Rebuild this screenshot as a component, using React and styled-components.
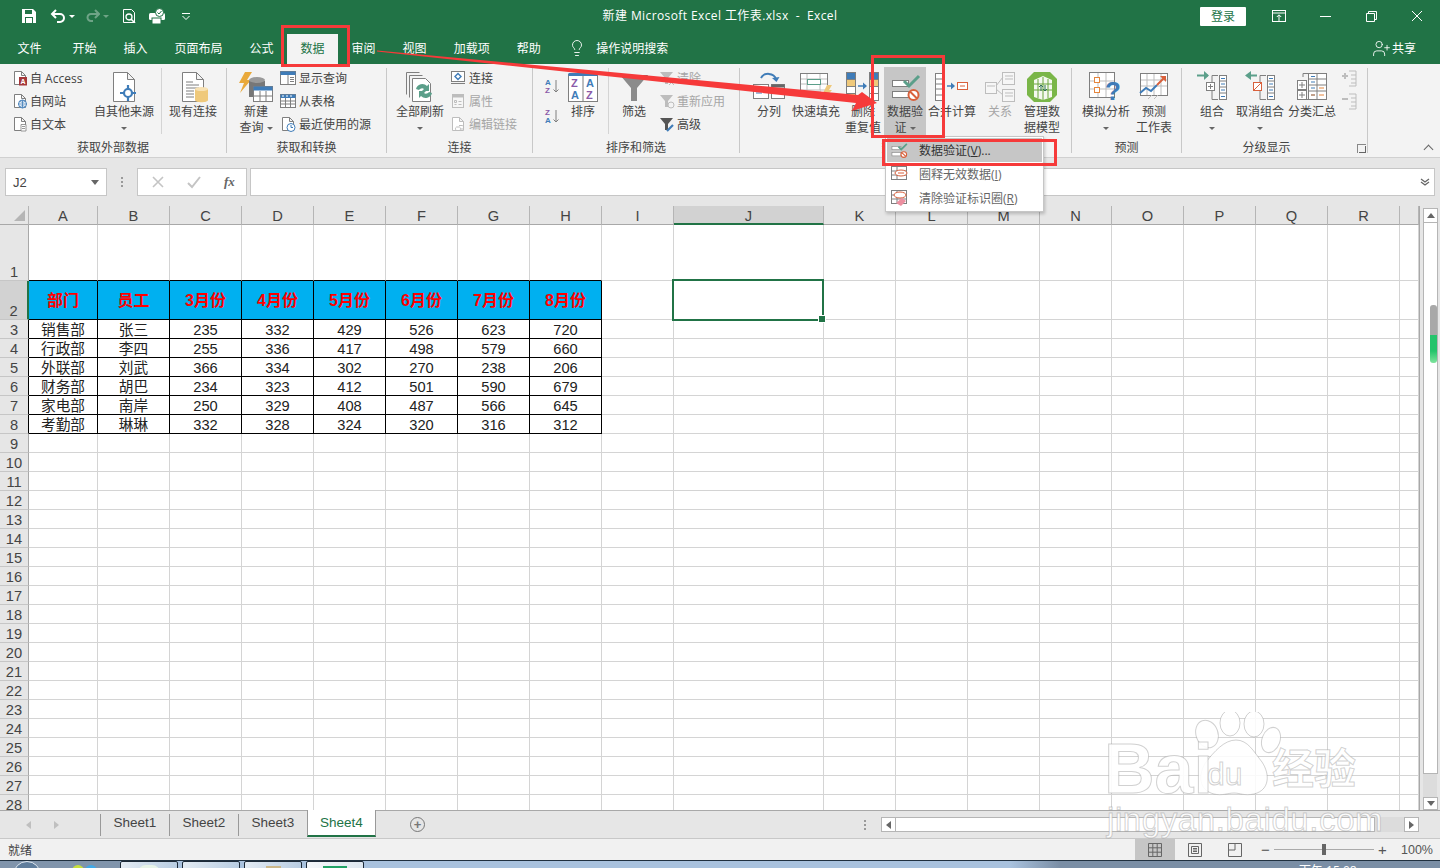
import React from "react";
import styled, { createGlobalStyle } from "styled-components";
import { Lightbulb, UserPlus } from "lucide-react";

const GREEN = "#217346";
const LINE = "#7f7f7f";
const BLUE = "#3f7cb8";
const SAND = "#efc97b";
const ORANGE = "#e5853c";
const RED = "#d9603b";
const TEAL = "#5b9f8a";
const MUTE = "#bdbdbd";

const GlobalStyle = createGlobalStyle`
  html, body { margin: 0; padding: 0; overflow: hidden; }
  body { font-family: "Open Sans", "Noto Sans CJK SC", sans-serif; }
  * { box-sizing: border-box; }
`;

/* ---------- icons ---------- */
const Svg = ({ s = 16, h, vb, children }) => (
  <svg width={s} height={h || s} viewBox={vb || `0 0 ${s} ${h || s}`} fill="none" style={{ display: "block", flex: "none" }}>
    {children}
  </svg>
);

const Page = ({ c = LINE }) => <path d="M2.5 1.5h7l4 4v9h-11zM9.5 1.5v4h4" stroke={c} fill="#fff" />;
const BigPage = ({ c = LINE }) => <path d="M5.5 1.5h14l7 7v22h-21zM19.5 1.5v7h7" stroke={c} fill="#fff" />;

const AccessIco = () => (
  <Svg><Page /><rect x="7" y="7" width="8" height="8.5" fill="#a4373a" /><text x="8.5" y="14" fontSize="7" fill="#fff" fontFamily="Liberation Sans" fontWeight="700">A</text></Svg>
);
const WebIco = () => (
  <Svg><Page /><circle cx="10.5" cy="11" r="4" fill="#fff" stroke={BLUE} /><path d="M6.5 11h8M10.5 7v8M8 8.5c2 1 3 1 5 0M8 13.5c2-1 3-1 5 0" stroke={BLUE} strokeWidth=".8" /></Svg>
);
const TextIco = () => (
  <Svg><Page /><path d="M9 8.5h5v6.5H9zM10 10.500h3M10 12.500h3" stroke={LINE} fill="#fff" strokeWidth=".8" /></Svg>
);
const ShowQueryIco = () => (
  <Svg><rect x=".5" y="1.500" width="15" height="13" fill="#fff" stroke={LINE} /><rect x=".5" y="1.500" width="15" height="3.500" fill={BLUE} /><path d="M8 5v9M10 7.500h4M10 9.500h4M10 11.500h4" stroke={LINE} /></Svg>
);
const TableIco = () => (
  <Svg><rect x=".5" y="1.500" width="15" height="13" fill="#fff" stroke={LINE} /><rect x=".5" y="1.500" width="15" height="3.500" fill={BLUE} /><path d="M2 3h12" stroke="#fff" strokeDasharray="2 2" /><path d="M5.500 5v9M10.500 5v9M1 8h14M1 11h14" stroke={LINE} /></Svg>
);
const RecentIco = () => (
  <Svg><Page /><circle cx="11" cy="11.500" r="4" fill="#fff" stroke={BLUE} /><path d="M11 9v2.500h2" stroke={BLUE} /></Svg>
);
const ConnectIco = () => (
  <Svg><rect x="1.500" y="1.500" width="13" height="10" fill="#fff" stroke={LINE} /><path d="M1 13.500h14" stroke={LINE} /><path d="M8 3.500l3 3-3 3-3-3z" stroke={BLUE} fill="#fff" strokeWidth="1.400" /></Svg>
);
const PropsIco = () => (
  <Svg><rect x="2.500" y="1.500" width="11" height="13" fill="#f6f6f6" stroke={MUTE} /><rect x="2.500" y="1.500" width="11" height="3" fill={MUTE} /><path d="M4.500 7.500h2v2h-2zM8.500 8.500h3M4.500 11.500h2M8.500 11.500h3" stroke={MUTE} /></Svg>
);
const LinksIco = () => (
  <Svg><Page c={MUTE} /><path d="M6.500 11h3a2 2 0 0 1 0 3.500h-3a2 2 0 0 1 0-3.500zM9 9.500h3.500a2 2 0 0 1 0 3.500H11" stroke={MUTE} fill="none" /></Svg>
);
const OtherSourceIco = () => (
  <Svg s={32}><BigPage /><circle cx="20" cy="22" r="4" stroke={BLUE} strokeWidth="2.200" fill="#fff" /><path d="M20 14v4M20 26v4M12 22h4M24 22h4" stroke={BLUE} strokeWidth="2.200" /></Svg>
);
const ExistingIco = () => (
  <Svg s={32}><BigPage /><path d="M9 11h7M9 14h13M9 17h13M9 20h8M9 23h8M9 26h8" stroke={LINE} /><path d="M18 18v11c0 3 13 3 13 0V18z" fill={SAND} /><ellipse cx="24.500" cy="18" rx="6.500" ry="2" fill="#f8e2b4" /></Svg>
);
const NewQueryIco = () => (
  <Svg s={36} h={32}>
    <path d="M7 1h7L9 9h4L2 22l4-10H1z" fill="#e9a93b" />
    <path d="M11 10v16h16V10z" fill="#777" /><ellipse cx="19" cy="9" rx="8" ry="3" fill="#9a9a9a" />
    <rect x="15.500" y="15.500" width="19" height="15" fill="#fff" stroke={LINE} /><rect x="15.500" y="15.500" width="19" height="4" fill={BLUE} />
    <path d="M22 20v10M28 20v10M16 25h18" stroke={LINE} />
  </Svg>
);
const RefreshIco = () => (
  <Svg s={32}>
    <path d="M2.500 1.500h13M2.500 1.500v22M5.500 4.500h13M5.500 4.500v22" stroke={LINE} />
    <path d="M8.500 7.500h13l5 5v18h-18z" fill="#fff" stroke={LINE} />
    <path d="M14 19a6.500 6.500 0 0 1 11-3l2-2v7h-7l2-2a3.500 3.500 0 0 0-5 1zM30 23a6.500 6.500 0 0 1-11 3l-2 2v-7h7l-2 2a3.500 3.500 0 0 0 5-1z" fill={TEAL} transform="translate(-2 -1)" />
  </Svg>
);
const SortUpIco = ({ flip }) => (
  <Svg>
    <text x="1" y="7" fontSize="8" fontWeight="700" fill={flip ? "#8a5aa8" : BLUE} fontFamily="Liberation Sans">{flip ? "Z" : "A"}</text>
    <text x="1" y="15" fontSize="8" fontWeight="700" fill={flip ? BLUE : "#8a5aa8"} fontFamily="Liberation Sans">{flip ? "A" : "Z"}</text>
    <path d="M12 2v12M9.500 11.500l2.500 2.500 2.500-2.500" stroke={LINE} />
  </Svg>
);
const SortBigIco = () => (
  <Svg s={30} h={32}>
    <rect x=".5" y="3.500" width="29" height="27" fill="#fff" stroke={LINE} /><rect x=".5" y="2" width="29" height="3" fill={BLUE} /><path d="M15 5v25" stroke={LINE} />
    <text x="3" y="16" fontSize="11" fontWeight="700" fill="#8a5aa8" fontFamily="Liberation Sans">Z</text>
    <text x="3" y="28" fontSize="11" fontWeight="700" fill={BLUE} fontFamily="Liberation Sans">A</text>
    <text x="18" y="16" fontSize="11" fontWeight="700" fill={BLUE} fontFamily="Liberation Sans">A</text>
    <text x="18" y="28" fontSize="11" fontWeight="700" fill="#8a5aa8" fontFamily="Liberation Sans">Z</text>
  </Svg>
);
const FunnelIco = () => (
  <Svg s={32}><path d="M2 4h28L19 17v13h-6V17z" fill="#8b8b8b" /><path d="M2 4h28l-3 3H5z" fill="#6d6d6d" /></Svg>
);
const MiniFunnel = ({ c = MUTE, children }) => (
  <Svg><path d="M1 2h13L9 8v6H6V8z" fill={c} />{children}</Svg>
);
const SplitIco = () => (
  <Svg s={32}>
    <path d="M8 7a8 7 0 0 1 15 1" stroke={BLUE} strokeWidth="2" /><path d="M19 7l4.500 4 3-5z" fill={BLUE} />
    <rect x=".5" y="13.500" width="15" height="14" fill="#fff" stroke={LINE} /><path d="M3 18h10M3 22h6" stroke={BLUE} />
    <rect x="18.500" y="13.500" width="13" height="14" fill="#fff" stroke={LINE} /><rect x="18.500" y="13.500" width="13" height="3" fill="#666" /><path d="M21 20h3M27 20h3" stroke={BLUE} />
  </Svg>
);
const FlashIco = () => (
  <Svg s={32}>
    <rect x=".5" y="2.500" width="27" height="22" fill="#fff" stroke={LINE} /><path d="M7 3v21M20 3v21M1 8h26M1 13h26M1 19h26" stroke={MUTE} />
    <rect x="7.500" y="8.500" width="13" height="5" fill="#fff" stroke={TEAL} />
    <rect x="4" y="19" width="16" height="6" fill="#ddd" /><path d="M27 14h5l-3 5h3l-9 10 3-7h-3z" fill={SAND} />
  </Svg>
);
const RemoveDupIco = () => (
  <Svg s={34} h={32}>
    {[0, 1, 2, 3].map((i) => (
      <rect key={i} x=".5" y={1.5 + i * 7} width="9" height="7" fill={i % 2 ? SAND : i === 0 ? BLUE : "#fff"} stroke={LINE} />
    ))}
    {[0, 1, 2, 3].map((i) => (
      <rect key={i} x="23.500" y={1.5 + i * 7} width="9" height="7" fill={i === 0 ? BLUE : i === 1 ? SAND : "#fff"} stroke={LINE} />
    ))}
    <path d="M12 15h7" stroke={BLUE} strokeWidth="1.500" /><path d="M17 11.500l4 3.500-4 3.500z" fill={BLUE} />
  </Svg>
);
const ValidateIco = ({ s = 32 }) => (
  <Svg s={s} vb="0 0 32 32">
    <rect x="3.500" y="9.500" width="16" height="6" fill="#fff" stroke={LINE} />
    <rect x="3.500" y="20.500" width="16" height="6" fill="#fff" stroke={LINE} />
    <path d="M15 10l5 5 10-10" stroke={TEAL} strokeWidth="3" />
    <circle cx="24.500" cy="24" r="5" fill="#fff" stroke={RED} strokeWidth="2" /><path d="M21 20.500l7 7" stroke={RED} strokeWidth="2" />
  </Svg>
);
const ConsolidateIco = () => (
  <Svg s={34} h={32}>
    <rect x=".5" y="2.500" width="9" height="27" fill="#fff" stroke={LINE} /><path d="M1 8h8M1 13h8M1 18h8M1 24h8" stroke={LINE} />
    <path d="M12 15h6" stroke={BLUE} strokeWidth="1.500" /><path d="M16 11.500l4 3.500-4 3.500z" fill={BLUE} />
    <rect x="22.500" y="11.500" width="10" height="7" fill="#fff" stroke={RED} /><path d="M25 15h5" stroke={RED} />
  </Svg>
);
const RelateIco = () => (
  <Svg s={32}>
    <rect x="1.500" y="11.500" width="11" height="11" fill="#f6f6f6" stroke={MUTE} /><rect x="18.500" y="1.500" width="12" height="12" fill="#f6f6f6" stroke={MUTE} /><rect x="18.500" y="18.500" width="12" height="12" fill="#f6f6f6" stroke={MUTE} />
    <path d="M12 15l7-9M12 18l7 6M3 15h8M21 5h8M21 8h8M21 22h8M21 25h8" stroke={MUTE} />
  </Svg>
);
const ModelIco = () => (
  <Svg s={32}>
    <path d="M8 1h16l7 7v16l-7 7H8l-7-7V8z" fill="#7ab648" />
    <path d="M8 9l9-4 9 4v17l-9 3-9-3z" fill="#fff" opacity=".92" />
    <path d="M12 8v19M17 6v23M22 8v19M8 13h18M8 19h18" stroke="#6aa53c" />
    <path d="M15 20v-6M13 16l2-2 2 2M19 14v6M17 18l2 2 2-2" stroke="#2f6f55" />
  </Svg>
);
const WhatIfIco = () => (
  <Svg s={34} h={32}>
    <rect x=".5" y="1.500" width="25" height="25" fill="#fff" stroke={LINE} /><path d="M9 2v24M17 2v24M1 10h24M1 18h24" stroke={MUTE} />
    <rect x="5.500" y="6.500" width="5" height="5" fill="#fff" stroke={ORANGE} /><rect x="5.500" y="16.500" width="5" height="5" fill="#fff" stroke={ORANGE} />
    <text x="16" y="29" fontSize="26" fontWeight="700" fill={BLUE} fontFamily="Liberation Sans">?</text>
  </Svg>
);
const ForecastIco = () => (
  <Svg s={32}>
    <rect x="2.500" y="2.500" width="27" height="22" fill="#fff" stroke={LINE} /><path d="M9 3v21M16 3v21M23 3v21M3 9h26M3 15h26" stroke={MUTE} />
    <path d="M2 22l6-5 5 3 6-6" stroke={BLUE} strokeWidth="2" /><path d="M19 14l7-7" stroke={RED} strokeWidth="2" /><path d="M22 5h6v6z" fill={RED} />
    <path d="M10 28l4-4M16 28l4-4" stroke={MUTE} />
  </Svg>
);
const ListBar = ({ x }) => (
  <g>
    <rect x={x + 0.5} y="4.500" width="7" height="24" fill="#fff" stroke={LINE} />
    <path d={`M${x + 1} 10h6M${x + 1} 16h6M${x + 1} 22h6`} stroke={LINE} />
    <path d={`M${x + 2} 7.500h4M${x + 2} 13h4M${x + 2} 19h4M${x + 2} 25.500h4`} stroke={BLUE} />
  </g>
);
const GroupIco = () => (
  <Svg s={32}>
    <path d="M1 4.500h11" stroke={TEAL} strokeWidth="2" /><path d="M8 0l5 4.500-5 4.500z" fill={TEAL} />
    <path d="M22 4.500h-6v24h6" stroke={LINE} /><rect x="10.500" y="11.500" width="8" height="8" fill="#fff" stroke={LINE} /><path d="M12 15.500h5M14.500 13v5" stroke={LINE} />
    <ListBar x={23} />
  </Svg>
);
const UngroupIco = () => (
  <Svg s={32}>
    <path d="M13 4.500H3" stroke={TEAL} strokeWidth="2" /><path d="M7 0L1 4.500 7 9z" fill={TEAL} />
    <path d="M22 4.500h-6v24h6" stroke={LINE} /><rect x="9.500" y="11.500" width="8" height="8" fill="#fff" stroke={RED} /><path d="M10 19l7-7" stroke={RED} />
    <ListBar x={23} />
  </Svg>
);
const SubtotalIco = () => (
  <Svg s={32}>
    <path d="M7 6V2.500h7M7 22v6.500h7" stroke={LINE} />
    <rect x="1.500" y="9.500" width="9" height="9" fill="#fff" stroke={LINE} /><path d="M3 14h6M6 11v6" stroke={LINE} />
    <rect x="1.500" y="19.500" width="9" height="9" fill="#fff" stroke={LINE} /><path d="M3 24h6M6 21v6" stroke={LINE} />
    <rect x="12.500" y="2.500" width="18" height="26" fill="#fff" stroke={LINE} /><path d="M21 3v25M13 8h17M13 14h17M13 20h17" stroke={LINE} />
    <path d="M15 5.500h4M15 11h4M15 17h4M15 24h4" stroke={BLUE} /><path d="M23 17h5M23 24h5M15 24h4" stroke={ORANGE} />
  </Svg>
);
const PlusMinusIco = ({ minus }) => (
  <Svg s={16} h={18}>
    <path d={minus ? "M1 7h6" : "M1 7h6M4 4v6"} stroke={MUTE} strokeWidth="2" />
    <path d="M8 2h7v15H8M10 6h5M10 10h5M10 14h5" stroke={MUTE} />
  </Svg>
);
const CircleIco = () => (
  <Svg s={18}><rect x="1.500" y="1.500" width="15" height="13" fill="#fff" stroke={LINE} /><path d="M2 6h14M2 10h14M7 2v12" stroke={LINE} /><ellipse cx="11" cy="8" rx="6" ry="3" fill="#fff" stroke={RED} /><path d="M8 8h6" stroke={RED} /></Svg>
);
const ClearCircleIco = () => (
  <Svg s={18}><rect x="1.500" y="1.500" width="15" height="13" fill="#fff" stroke={LINE} /><path d="M2 6h14M2 10h14M7 2v12" stroke={LINE} /><ellipse cx="10" cy="6" rx="6" ry="3" fill="#fff" stroke={RED} /><path d="M6 14l6-5 4 3-5 5z" fill="#ec8fa0" /></Svg>
);

/* ---------- page ---------- */
const Page_ = styled.div`
  position: relative;
  width: 1440px;
  height: 868px;
  display: flex;
  flex-direction: column;
  overflow: hidden;
  background: #e6e6e6;
  color: #444;
  font-size: 12px;
`;

const TitleBar = styled.div`
  height: 32px;
  flex: none;
  display: grid;
  grid-template-columns: 1fr auto 1fr;
  align-items: center;
  background: ${GREEN};
  color: #fff;
`;

const Qat = styled.div`
  display: flex;
  align-items: center;
  padding-left: 22px;
`;

const QatSlot = styled.span`
  display: block;
  margin-left: ${(p) => p.$ml || 0}px;
  opacity: ${(p) => (p.$dim ? 0.35 : 1)};
`;

const WhiteCaret = styled.span`
  display: block;
  width: 0;
  height: 0;
  border: 3px solid transparent;
  border-top: 3px solid #fff;
  border-bottom: 0;
  margin-left: ${(p) => p.$ml || 3}px;
  opacity: ${(p) => (p.$dim ? 0.35 : 1)};
`;

const TitleText = styled.div`
  font-size: 12px;
  line-height: 16px;
  letter-spacing: 0.4px;
  white-space: pre;
`;

const WinBox = styled.div`
  display: flex;
  justify-content: flex-end;
  align-items: center;
`;

const Login = styled.div`
  width: 46px;
  height: 19px;
  margin-right: 10px;
  background: #fff;
  color: ${GREEN};
  border-radius: 1px;
  text-align: center;
  line-height: 19px;
`;

const WinBtn = styled.div`
  width: 46px;
  height: 32px;
  display: flex;
  align-items: center;
  justify-content: center;
`;

const TabRow = styled.div`
  height: 32px;
  flex: none;
  display: flex;
  align-items: flex-end;
  padding-left: 4px;
  background: ${GREEN};
  color: #fff;
`;

const Tab = styled.div`
  height: 30px;
  padding: 0 13.5px;
  margin-right: ${(p) => p.$mr || 0}px;
  line-height: 29px;
  white-space: nowrap;
  background: ${(p) => (p.$on ? "#f3f3f3" : "transparent")};
  color: ${(p) => (p.$on ? GREEN : "#fff")};
`;

const Search = styled.div`
  height: 30px;
  display: flex;
  align-items: center;
  gap: 10px;
  margin-left: 14px;
  padding-bottom: 2px;
`;

const Share = styled.div`
  margin-left: auto;
  margin-right: 24px;
  height: 30px;
  display: flex;
  align-items: center;
  gap: 1px;
  padding-bottom: 2px;
`;

const Ribbon = styled.div`
  height: 94px;
  flex: none;
  display: flex;
  position: relative;
  background: #f3f3f3;
  border-bottom: 1px solid #d0d0d0;
`;

const Group = styled.div`
  position: relative;
  width: ${(p) => p.$w}px;
  height: 85px;
  margin-top: 4px;
  padding-left: ${(p) => p.$pad || 0}px;
  flex: none;
  display: flex;
  align-items: flex-start;
  border-right: 1px solid #c8c8c8;
`;

const GroupLabel = styled.div`
  position: absolute;
  left: 0;
  right: ${(p) => p.$inset || 0}px;
  bottom: -4px;
  height: 18px;
  line-height: 17px;
  text-align: center;
  color: #444;
`;

const Launcher = styled.div`
  position: absolute;
  right: 1px;
  bottom: 0;
  width: 9px;
  height: 9px;
  border: 1px solid #888;
  border-width: 1px 0 0 1px;
  &::after {
    content: "";
    position: absolute;
    left: 1px;
    top: 1px;
    width: 6px;
    height: 6px;
    border: solid #666;
    border-width: 0 1px 1px 0;
  }
`;

const Large = styled.div`
  width: ${(p) => p.$w}px;
  height: 70px;
  margin-left: ${(p) => p.$ml || 0}px;
  margin-top: -1px;
  padding-top: 3px;
  flex: none;
  display: flex;
  flex-direction: column;
  align-items: center;
  background: ${(p) => (p.$on ? "#c6c6c6" : "transparent")};
  color: ${(p) => (p.$off ? "#a6a6a6" : "#444")};
`;

const IconBox = styled.div`
  height: 34px;
  padding-top: 1px;
  display: flex;
  justify-content: center;
  flex: none;
`;

const Line = styled.div`
  height: 16px;
  line-height: 16px;
  white-space: nowrap;
  display: flex;
  align-items: center;
  justify-content: center;
  gap: 3px;
`;

const Caret = styled.span`
  display: inline-block;
  width: 0;
  height: 0;
  border: 3px solid transparent;
  border-top: 3px solid #666;
  border-bottom: 0;
`;

const SmallCol = styled.div`
  width: ${(p) => (p.$w ? `${p.$w}px` : "auto")};
  margin-left: ${(p) => p.$ml || 0}px;
  margin-top: -2px;
  flex: none;
  display: flex;
  flex-direction: column;
`;

const Small = styled.div`
  height: 23px;
  display: flex;
  align-items: center;
  gap: ${(p) => p.$gap || 3}px;
  white-space: nowrap;
  color: ${(p) => (p.$off ? "#a6a6a6" : "#444")};
`;

const SortCol = styled.div`
  width: 20px;
  padding: 10px 0 0 3px;
  flex: none;
  display: flex;
  flex-direction: column;
  gap: 14px;
`;

const VSep = styled.div`
  width: 1px;
  height: 66px;
  margin: 0 ${(p) => p.$m}px;
  flex: none;
  background: #d4d4d4;
`;

const Collapse = styled.div`
  position: absolute;
  right: 8px;
  bottom: 4px;
  width: 7px;
  height: 7px;
  border: solid #666;
  border-width: 1px 0 0 1px;
  transform: rotate(45deg);
`;

const FormulaBar = styled.div`
  height: 48px;
  flex: none;
  display: flex;
  padding: 10px 5px 0;
  background: #e6e6e6;
`;

const FieldBox = styled.div`
  height: 28px;
  background: #fff;
  border: 1px solid #c6c6c6;
  display: flex;
  align-items: center;
`;

const NameBox = styled(FieldBox)`
  width: 102px;
  padding: 0 7px;
  justify-content: space-between;
  font-family: "Liberation Sans", sans-serif;
  font-size: 13px;
`;

const Dots = styled.div`
  width: 2px;
  height: 10px;
  margin: 9px 14px 0;
  background: repeating-linear-gradient(#999 0 2px, transparent 2px 4px);
`;

const FxBox = styled(FieldBox)`
  width: 110px;
  margin-right: 3px;
  padding-left: 13px;
  gap: 22px;
`;

const Fx = styled.span`
  font-family: "Liberation Serif", serif;
  font-style: italic;
  font-weight: 700;
  font-size: 13px;
  color: #666;
  margin-left: 1px;
`;

const InputBox = styled(FieldBox)`
  flex: 1;
  justify-content: flex-end;
  padding-right: 3px;
`;

const Sheet = styled.div`
  height: 604px;
  flex: none;
  display: flex;
`;

const GridWrap = styled.div`
  position: relative;
  width: 1419px;
  height: 604px;
  overflow: hidden;
  flex: none;
  background: #fff;
`;

const Grid = styled.div`
  display: grid;
  grid-template-columns: ${(p) => p.$cols};
  grid-template-rows: 19px 56px 39px repeat(26, 19px);
  font-family: "Liberation Sans", "Noto Sans CJK SC", sans-serif;
  font-size: 14.67px;
`;

const Corner = styled.div`
  background: #e6e6e6;
  border-right: 1px solid #b5b5b5;
  border-bottom: 1px solid #a8a8a8;
  display: flex;
  align-items: flex-end;
  justify-content: flex-end;
  padding: 0 3px 3px 0;
  &::after {
    content: "";
    border: solid transparent;
    border-width: 0 0 11px 11px;
    border-bottom-color: #b5b5b5;
  }
`;

const ColHead = styled.div`
  background: ${(p) => (p.$on ? "#d2d2d2" : "#e6e6e6")};
  border-right: 1px solid #b5b5b5;
  border-bottom: ${(p) => (p.$on ? `2px solid ${GREEN}` : "1px solid #a8a8a8")};
  text-align: center;
  line-height: 21px;
  color: #444;
`;

const RowHead = styled.div`
  background: ${(p) => (p.$on ? "#d2d2d2" : "#e6e6e6")};
  border-right: ${(p) => (p.$on ? `2px solid ${GREEN}` : p.$edge ? "1px solid #000" : "1px solid #a8a8a8")};
  border-bottom: 1px solid #c6c6c6;
  display: flex;
  align-items: flex-end;
  justify-content: center;
  line-height: 15px;
  color: #444;
`;

const Cell = styled.div`
  padding-top: ${(p) => (p.$black ? "2px" : 0)};
  border-right: 1px solid ${(p) => (p.$black ? "#000" : "#d4d4d4")};
  border-bottom: 1px solid ${(p) => (p.$black || p.$under ? "#000" : "#d4d4d4")};
  display: flex;
  align-items: center;
  justify-content: center;
  line-height: 18px;
  color: #222;
  white-space: nowrap;
  overflow: hidden;
`;

const HeadCell = styled(Cell)`
  background: #00b0f0;
  color: #ff0000;
  font-size: 16px;
  font-weight: 700;
`;

const Selection = styled.div`
  position: absolute;
  left: 672px;
  top: 73px;
  width: 152px;
  height: 42px;
  border: 2px solid ${GREEN};
  &::after {
    content: "";
    position: absolute;
    right: -4px;
    bottom: -4px;
    width: 6px;
    height: 6px;
    background: ${GREEN};
    border: 1px solid #fff;
  }
`;

const VScroll = styled.div`
  position: relative;
  width: 21px;
  padding: 2px 3px 0;
  flex: none;
  display: flex;
  flex-direction: column;
  border-left: 1px solid #a8a8a8;
  background: #e6e6e6;
`;

const ScrollBtn = styled.div`
  width: 15px;
  height: ${(p) => p.$h || 15}px;
  flex: none;
  background: #fff;
  border: 1px solid #b5b5b5;
  display: flex;
  align-items: center;
  justify-content: center;
`;

const Tri = styled.span`
  width: 0;
  height: 0;
  border: 4px solid transparent;
  ${(p) => p.$dir === "up" && `border-bottom: 5px solid #666; border-top: 0;`}
  ${(p) => p.$dir === "down" && `border-top: 5px solid #666; border-bottom: 0;`}
  ${(p) => p.$dir === "left" && `border-right: 5px solid #666; border-left: 0;`}
  ${(p) => p.$dir === "right" && `border-left: 5px solid #666; border-right: 0;`}
  ${(p) => p.$dim && `opacity: .3;`}
`;

const VThumb = styled.div`
  width: 15px;
  height: 551px;
  flex: none;
  background: #fff;
  border: 1px solid #b5b5b5;
  border-top: 0;
`;

const VTrack = styled.div`
  flex: 1;
  background: #dcdcdc;
`;

const SideBar = styled.div`
  position: absolute;
  right: 3px;
  top: 99px;
  width: 7px;
  height: 58px;
  border-radius: 3px;
  background: linear-gradient(#a8a8a8 0 30px, #25c46c 30px 46px, #7fe49d 100%);
`;

const TabsBar = styled.div`
  height: 28px;
  flex: none;
  display: flex;
  align-items: stretch;
  padding-right: 21px;
  background: #e6e6e6;
  border-top: 1px solid #a8a8a8;
`;

const SheetNav = styled.div`
  width: 100px;
  flex: none;
  display: flex;
  align-items: center;
  gap: 23px;
  padding-left: 26px;
`;

const SheetTab = styled.div`
  width: 69px;
  height: ${(p) => (p.$on ? "27px" : "22px")};
  margin-top: ${(p) => (p.$on ? "-1px" : "3px")};
  flex: none;
  text-align: center;
  line-height: ${(p) => (p.$on ? "26px" : "18px")};
  font-family: "Liberation Sans", sans-serif;
  font-size: 13.500px;
  background: ${(p) => (p.$on ? "#fff" : "transparent")};
  color: ${(p) => (p.$on ? GREEN : "#444")};
  border-left: 1px solid #999;
  ${(p) => p.$on && `border-right: 1px solid #999; border-bottom: 2px solid ${GREEN};`}
`;

const AddSheet = styled.div`
  width: 15px;
  height: 15px;
  margin: 6px 0 0 34px;
  border: 1.500px solid #777;
  border-radius: 50%;
  color: #777;
  display: flex;
  align-items: center;
  justify-content: center;
  font: 700 13px/1 "Liberation Sans", sans-serif;
`;

const HScrollWrap = styled.div`
  margin-left: auto;
  display: flex;
  align-items: center;
`;

const HDots = styled.div`
  width: 2px;
  height: 10px;
  margin-right: 15px;
  background: repeating-linear-gradient(#999 0 2px, transparent 2px 4px);
`;

const HScroll = styled.div`
  width: 538px;
  height: 15px;
  display: flex;
  background: #dcdcdc;
`;

const HThumb = styled.div`
  width: 479px;
  background: #fff;
  border: 1px solid #b5b5b5;
  border-left: 0;
`;

const HTrack = styled.div`
  flex: 1;
`;

const StatusBar = styled.div`
  height: 22px;
  flex: none;
  display: flex;
  align-items: center;
  padding-left: 8px;
  background: #f1f1f1;
  border-top: 1px solid #c8c8c8;
`;

const ViewBtns = styled.div`
  margin-left: auto;
  height: 100%;
  display: flex;
`;

const ViewBtn = styled.div`
  width: 40px;
  display: flex;
  align-items: center;
  justify-content: center;
  background: ${(p) => (p.$on ? "#c6c6c6" : "transparent")};
`;

const Zoom = styled.div`
  display: flex;
  align-items: center;
  width: 185px;
  padding-left: 6px;
  color: #555;
  font-family: "Liberation Sans", sans-serif;
`;

const ZoomMark = styled.span`
  font-size: 15px;
  width: 9px;
  line-height: 1;
  text-align: center;
`;

const ZoomTrack = styled.div`
  position: relative;
  width: 100px;
  height: 1px;
  margin: 0 4px;
  background: #aaa;
  &::after {
    content: "";
    position: absolute;
    left: 48px;
    top: -5px;
    width: 4px;
    height: 11px;
    background: #666;
  }
`;

const ZoomText = styled.span`
  margin-left: 14px;
  font-size: 12.500px;
`;

const Taskbar = styled.div`
  height: 8px;
  flex: none;
  position: relative;
  display: flex;
  overflow: hidden;
  padding-left: 120px;
  gap: 4px;
  border-top: 1px solid #20303f;
  background: linear-gradient(90deg, #8094ab 0 120px, #a9c2de 120px 1010px, #7a8ea5 1060px);
`;

const TaskBtn = styled.div`
  width: 58px;
  height: 12px;
  display: flex;
  justify-content: center;
  padding-top: ${(p) => p.$top}px;
  background: ${(p) => (p.$on ? "linear-gradient(90deg, #f4f7fa, #dfe8f0)" : "linear-gradient(90deg, #e3ebf3, #b9cde2)")};
  border: 1px solid #1d2a38;
  border-radius: 2px 2px 0 0;
`;

const TaskGlyph = styled.span`
  display: block;
  width: ${(p) => p.$w}px;
  height: 10px;
  background: ${(p) => p.$c};
  border-radius: ${(p) => (p.$round ? "8px 8px 0 0" : "0")};
`;

const Orb = styled.div`
  position: absolute;
  left: 13px;
  top: 0;
  width: 28px;
  height: 28px;
  border-radius: 50%;
  border: 1px solid #dfe8f0;
  background: #5f7d9c;
`;

const TrayDot = styled.div`
  position: absolute;
  left: ${(p) => p.$x}px;
  top: 4px;
  width: 12px;
  height: 12px;
  border-radius: 50%;
  background: ${(p) => p.$c};
`;

const Clock = styled.div`
  position: absolute;
  left: 1299px;
  top: 2px;
  color: #fff;
  line-height: 16px;
  white-space: nowrap;
`;

const Menu = styled.div`
  position: absolute;
  left: 885px;
  top: 136px;
  width: 159px;
  height: 76px;
  padding: 1px;
  background: #fff;
  border: 1px solid #c6c6c6;
  box-shadow: 1px 2px 3px rgba(0, 0, 0, 0.2);
`;

const MenuItem = styled.div`
  height: 24px;
  display: flex;
  align-items: center;
  gap: 11px;
  padding-left: 3px;
  white-space: nowrap;
  background: ${(p) => (p.$on ? "#c6c6c6" : "transparent")};
  color: ${(p) => (p.$on ? "#333" : "#666")};
  u { text-underline-offset: 1px; }
`;

const RedBox = styled.div`
  position: absolute;
  left: ${(p) => p.$x}px;
  top: ${(p) => p.$y}px;
  width: ${(p) => p.$w}px;
  height: ${(p) => p.$h}px;
  border: 3px solid #f63a3a;
  pointer-events: none;
`;

const ArrowLayer = styled.svg`
  position: absolute;
  left: 0;
  top: 0;
  pointer-events: none;
`;

const Watermark = styled.div`
  position: absolute;
  left: 1104px;
  top: 712px;
  width: 262px;
  height: 126px;
  pointer-events: none;
  font-family: "Liberation Sans", "Noto Sans CJK SC", sans-serif;
  color: rgba(255, 255, 255, 0.9);
  -webkit-text-stroke: 1px rgba(140, 140, 140, 0.4);
  white-space: nowrap;
`;

const MarkBrand = styled.div`
  position: absolute;
  left: 0;
  top: 22px;
  font-size: 70px;
  font-weight: 700;
  line-height: 70px;
`;

const MarkDu = styled.div`
  position: absolute;
  left: 103px;
  top: 44px;
  font-size: 32px;
  line-height: 36px;
`;

const MarkCn = styled.div`
  position: absolute;
  left: 168px;
  top: 30px;
  font-size: 42px;
  font-weight: 700;
  line-height: 56px;
`;

const MarkUrl = styled.div`
  position: absolute;
  left: 3px;
  top: 90px;
  font-size: 33px;
  line-height: 36px;
  letter-spacing: .6px;
`;

const PawLayer = styled.svg`
  position: absolute;
  left: 70px;
  top: 0;
`;

/* ---------- data ---------- */
const COLS = [
  ["A", 69], ["B", 72], ["C", 72], ["D", 72], ["E", 72], ["F", 72], ["G", 72], ["H", 72], ["I", 72], ["J", 150],
  ["K", 72], ["L", 72], ["M", 72], ["N", 72], ["O", 72], ["P", 72], ["Q", 72], ["R", 72], ["", 19],
];
const TEMPLATE = "29px " + COLS.map((c) => `${c[1]}px`).join(" ");
const HEAD = ["部门", "员工", "3月份", "4月份", "5月份", "6月份", "7月份", "8月份"];
const ROWS = [
  ["销售部", "张三", 235, 332, 429, 526, 623, 720],
  ["行政部", "李四", 255, 336, 417, 498, 579, 660],
  ["外联部", "刘武", 366, 334, 302, 270, 238, 206],
  ["财务部", "胡巴", 234, 323, 412, 501, 590, 679],
  ["家电部", "南岸", 250, 329, 408, 487, 566, 645],
  ["考勤部", "琳琳", 332, 328, 324, 320, 316, 312],
];
const TABS = ["开始", "插入", "页面布局", "公式", "数据", "审阅", "视图", "加载项", "帮助"];

const Big = ({ w, ml, on, off, icon, lines }) => (
  <Large $w={w} $ml={ml} $on={on} $off={off}>
    <IconBox>{icon}</IconBox>
    {lines.map((l, i) => (
      <Line key={i}>
        {l.replace("▾", "")}
        {l.includes("▾") && <Caret />}
      </Line>
    ))}
  </Large>
);

const SheetRows = () => {
  const out = [];
  for (let r = 1; r <= 28; r++) {
    out.push(
      <RowHead key={`h${r}`} $on={r === 2} $edge={r >= 3 && r <= 8}>
        {r}
      </RowHead>
    );
    COLS.forEach((c, i) => {
      const key = `${r}-${i}`;
      if (r === 2 && i < 8) {
        out.push(<HeadCell key={key} $black>{HEAD[i]}</HeadCell>);
      } else if (r >= 3 && r <= 8 && i < 8) {
        out.push(<Cell key={key} $black>{ROWS[r - 3][i]}</Cell>);
      } else {
        out.push(<Cell key={key} $under={r === 1 && i < 8} />);
      }
    });
  }
  return out;
};

export default function App() {
  return (
    <Page_>
      <GlobalStyle />
      <TitleBar>
        <Qat>
          <QatSlot>
            <Svg s={14}><path d="M0 0h11l3 3v11H0z" fill="#fff" /><rect x="3" y="1" width="7" height="4" fill={GREEN} /><rect x="3" y="8" width="8" height="6" fill={GREEN} /><rect x="4" y="9" width="6" height="5" fill="#fff" /></Svg>
          </QatSlot>
          <QatSlot $ml={14}>
            <Svg><path d="M6 2L2 6l4 4M2 6h8a3.500 3.500 0 0 1 0 8H7" stroke="#fff" strokeWidth="2" /></Svg>
          </QatSlot>
          <WhiteCaret />
          <QatSlot $ml={11} $dim>
            <Svg s={14}><path d="M9 1l4 4-4 4M13 5H5a3.500 3.500 0 0 0 0 7h2" stroke="#fff" strokeWidth="2" /></Svg>
          </QatSlot>
          <WhiteCaret $dim />
          <QatSlot $ml={13}>
            <Svg s={14}><path d="M1.500.5h8l3 3v10h-11z" stroke="#fff" /><circle cx="7" cy="8" r="3" stroke="#fff" strokeWidth="1.300" /><path d="M9 10l4 4" stroke="#fff" strokeWidth="1.600" /></Svg>
          </QatSlot>
          <QatSlot $ml={13}>
            <Svg><rect x="0" y="5" width="16" height="7" rx="1.500" fill="#fff" /><rect x="3" y="10" width="9" height="6" fill="#fff" stroke={GREEN} /><circle cx="10.500" cy="4.500" r="4" fill="#fff" stroke={GREEN} /><path d="M8.500 4.500l1.500 1.500 2.500-3" stroke={GREEN} /></Svg>
          </QatSlot>
          <QatSlot $ml={16}>
            <Svg s={10}><path d="M1 2.500h8" stroke="#fff" /><path d="M1.500 5l3.500 3.500L8.500 5" stroke="#fff" /></Svg>
          </QatSlot>
        </Qat>
        <TitleText>新建 Microsoft Excel 工作表.xlsx  -  Excel</TitleText>
        <WinBox>
          <Login>登录</Login>
          <WinBtn>
            <Svg s={14}><rect x=".5" y="1.500" width="13" height="11" stroke="#fff" /><path d="M1 4h12" stroke="#fff" /><path d="M7 12V6M4.800 8L7 5.800 9.200 8" stroke="#fff" /></Svg>
          </WinBtn>
          <WinBtn><Svg s={11}><path d="M0 5.500h11" stroke="#fff" /></Svg></WinBtn>
          <WinBtn><Svg s={11}><path d="M.5 2.500h8v8h-8zM2.500 2.500v-2h8v8h-2" stroke="#fff" /></Svg></WinBtn>
          <WinBtn><Svg s={12}><path d="M1 1l10 10M11 1L1 11" stroke="#fff" /></Svg></WinBtn>
        </WinBox>
      </TitleBar>

      <TabRow>
        <Tab $mr={4}>文件</Tab>
        {TABS.map((t) => (
          <Tab key={t} $on={t === "数据"}>{t}</Tab>
        ))}
        <Search>
          <Lightbulb size={18} strokeWidth={1.200} color="#fff" />
          操作说明搜索
        </Search>
        <Share>
          <UserPlus size={19} strokeWidth={1.100} color="#fff" />
          共享
        </Share>
      </TabRow>

      <Ribbon>
        <Group $w={227} $pad={12}>
          <SmallCol $w={81}>
            <Small $gap={2}><AccessIco />自 Access</Small>
            <Small $gap={2}><WebIco />自网站</Small>
            <Small $gap={2}><TextIco />自文本</Small>
          </SmallCol>
          <Big w={62} icon={<OtherSourceIco />} lines={["自其他来源", "▾"]} />
          <VSep $m={6} />
          <Big w={50} icon={<ExistingIco />} lines={["现有连接"]} />
          <GroupLabel>获取外部数据</GroupLabel>
        </Group>
        <Group $w={160} $pad={9}>
          <Big w={40} icon={<NewQueryIco />} lines={["新建", "查询▾"]} />
          <SmallCol $ml={4}>
            <Small><ShowQueryIco />显示查询</Small>
            <Small><TableIco />从表格</Small>
            <Small><RecentIco />最近使用的源</Small>
          </SmallCol>
          <GroupLabel>获取和转换</GroupLabel>
        </Group>
        <Group $w={146} $pad={8}>
          <Big w={50} icon={<RefreshIco />} lines={["全部刷新", "▾"]} />
          <SmallCol $ml={5}>
            <Small><ConnectIco />连接</Small>
            <Small $off><PropsIco />属性</Small>
            <Small $off><LinksIco />编辑链接</Small>
          </SmallCol>
          <GroupLabel>连接</GroupLabel>
        </Group>
        <Group $w={207} $pad={8}>
          <SortCol>
            <SortUpIco />
            <SortUpIco flip />
          </SortCol>
          <Big w={34} ml={5} icon={<SortBigIco />} lines={["排序"]} />
          <VSep $m={8} />
          <Big w={34} icon={<FunnelIco />} lines={["筛选"]} />
          <SmallCol $ml={8}>
            <Small $off $gap={2}><MiniFunnel><path d="M10 10l5 5M15 10l-5 5" stroke={MUTE} /></MiniFunnel>清除</Small>
            <Small $off $gap={2}><MiniFunnel><circle cx="12" cy="12" r="3" stroke={MUTE} /></MiniFunnel>重新应用</Small>
            <Small $gap={2}><MiniFunnel c="#555"><path d="M8 15l6-6" stroke={BLUE} strokeWidth="2.200" /></MiniFunnel>高级</Small>
          </SmallCol>
          <GroupLabel>排序和筛选</GroupLabel>
        </Group>
        <Group $w={332} $pad={7}>
          <Big w={44} icon={<SplitIco />} lines={["分列"]} />
          <Big w={50} icon={<FlashIco />} lines={["快速填充"]} />
          <Big w={42} ml={1} icon={<RemoveDupIco />} lines={["删除", "重复值"]} />
          <Big w={42} on icon={<ValidateIco />} lines={["数据验", "证▾"]} />
          <Big w={50} ml={1} icon={<ConsolidateIco />} lines={["合并计算"]} />
          <Big w={46} off icon={<RelateIco />} lines={["关系"]} />
          <Big w={38} icon={<ModelIco />} lines={["管理数", "据模型"]} />
          <GroupLabel>数据工具</GroupLabel>
        </Group>
        <Group $w={110} $pad={10}>
          <Big w={48} icon={<WhatIfIco />} lines={["模拟分析", "▾"]} />
          <Big w={48} icon={<ForecastIco />} lines={["预测", "工作表"]} />
          <GroupLabel>预测</GroupLabel>
        </Group>
        <Group $w={186} $pad={6}>
          <Big w={48} icon={<GroupIco />} lines={["组合", "▾"]} />
          <Big w={48} icon={<UngroupIco />} lines={["取消组合", "▾"]} />
          <Big w={56} icon={<SubtotalIco />} lines={["分类汇总"]} />
          <SmallCol $ml={1}>
            <Small><PlusMinusIco /></Small>
            <Small><PlusMinusIco minus /></Small>
          </SmallCol>
          <GroupLabel $inset={16}>分级显示</GroupLabel>
          <Launcher />
        </Group>
        <Collapse />
      </Ribbon>

      <FormulaBar>
        <NameBox>
          J2
          <Tri $dir="down" />
        </NameBox>
        <Dots />
        <FxBox>
          <Svg s={14}><path d="M2 2l10 10M12 2L2 12" stroke="#c4c4c4" strokeWidth="1.600" /></Svg>
          <Svg s={14}><path d="M1 8l4 4 8-10" stroke="#c4c4c4" strokeWidth="2" /></Svg>
          <Fx>fx</Fx>
        </FxBox>
        <InputBox>
          <Svg s={12}><path d="M2 3l4 3 4-3M2 6l4 3 4-3" stroke="#666" strokeWidth="1.300" /></Svg>
        </InputBox>
      </FormulaBar>

      <Sheet>
        <GridWrap>
          <Grid $cols={TEMPLATE}>
            <Corner />
            {COLS.map((c, i) => (
              <ColHead key={i} $on={c[0] === "J"}>{c[0]}</ColHead>
            ))}
            <SheetRows />
          </Grid>
          <Selection />
        </GridWrap>
        <VScroll>
          <ScrollBtn $h={15}><Tri $dir="up" /></ScrollBtn>
          <VThumb />
          <VTrack />
          <ScrollBtn $h={13}><Tri $dir="down" /></ScrollBtn>
          <SideBar />
        </VScroll>
      </Sheet>

      <TabsBar>
        <SheetNav>
          <Tri $dir="left" $dim />
          <Tri $dir="right" $dim />
        </SheetNav>
        <SheetTab>Sheet1</SheetTab>
        <SheetTab>Sheet2</SheetTab>
        <SheetTab>Sheet3</SheetTab>
        <SheetTab $on>Sheet4</SheetTab>
        <AddSheet>+</AddSheet>
        <HScrollWrap>
          <HDots />
          <HScroll>
            <ScrollBtn><Tri $dir="left" /></ScrollBtn>
            <HThumb />
            <HTrack />
            <ScrollBtn><Tri $dir="right" /></ScrollBtn>
          </HScroll>
        </HScrollWrap>
      </TabsBar>

      <StatusBar>
        就绪
        <ViewBtns>
          <ViewBtn $on>
            <Svg s={14}><path d="M.5.5h13v13H.5zM4.800 1v12M9.200 1v12M1 4.800h12M1 9.200h12" stroke="#666" /></Svg>
          </ViewBtn>
          <ViewBtn>
            <Svg s={14}><path d="M.5.5h13v13H.5zM3.500 3.500h7v7h-7zM5 5.500h4M5 7h4M5 8.500h4" stroke="#666" /></Svg>
          </ViewBtn>
          <ViewBtn>
            <Svg s={14}><path d="M.5.5h13v13H.5zM7 1v6H1" stroke="#666" /></Svg>
          </ViewBtn>
        </ViewBtns>
        <Zoom>
          <ZoomMark>−</ZoomMark>
          <ZoomTrack />
          <ZoomMark>+</ZoomMark>
          <ZoomText>100%</ZoomText>
        </Zoom>
      </StatusBar>

      <Taskbar>
        <Orb />
        <TrayDot $x={72} $c="#c8e03c" />
        <TrayDot $x={85} $c="#3fa9e8" />
        <TaskBtn $top={3}><TaskGlyph $w={22} $c="#e8f4e8" $round /></TaskBtn>
        <TaskBtn $top={8} />
        <TaskBtn $top={4}><TaskGlyph $w={15} $c="#cdb88a" /></TaskBtn>
        <TaskBtn $on $top={4}><TaskGlyph $w={24} $c="#21a366" /></TaskBtn>
        <Clock>下午 15:08</Clock>
      </Taskbar>

      <Menu>
        <MenuItem $on>
          <ValidateIco s={18} />
          <span>数据验证(<u>V</u>)...</span>
        </MenuItem>
        <MenuItem>
          <CircleIco />
          <span>圈释无效数据(<u>I</u>)</span>
        </MenuItem>
        <MenuItem>
          <ClearCircleIco />
          <span>清除验证标识圈(<u>R</u>)</span>
        </MenuItem>
      </Menu>

      <Watermark>
        <PawLayer width="130" height="100" viewBox="0 0 130 100" fill="rgba(255,255,255,.85)" stroke="rgba(140,140,140,.4)">
          <ellipse cx="33" cy="22" rx="11" ry="14" transform="rotate(-20 33 22)" />
          <ellipse cx="56" cy="11" rx="10" ry="13" />
          <ellipse cx="80" cy="12" rx="10" ry="13" />
          <ellipse cx="97" cy="28" rx="9" ry="13" transform="rotate(20 97 28)" />
          <path d="M62 28c12 0 18 12 26 22 8 12 8 28-8 32-10 2-14-1-20-1s-12 3-20 1c-16-4-16-20-8-32 8-10 18-22 30-22z" />
        </PawLayer>
        <MarkBrand>Bai</MarkBrand>
        <MarkDu>du</MarkDu>
        <MarkCn>经验</MarkCn>
        <MarkUrl>jingyan.baidu.com</MarkUrl>
      </Watermark>

      <RedBox $x={281} $y={25} $w={69} $h={42} />
      <RedBox $x={871} $y={55} $w={74} $h={83} />
      <RedBox $x={882} $y={139} $w={175} $h={27} />
      <ArrowLayer width="1440" height="868">
        <path d="M377 50.500 L858 95 L862 92 L877 103 L852 111 L856 103 L377 51.500 Z" fill="#f63a3a" />
      </ArrowLayer>
    </Page_>
  );
}
